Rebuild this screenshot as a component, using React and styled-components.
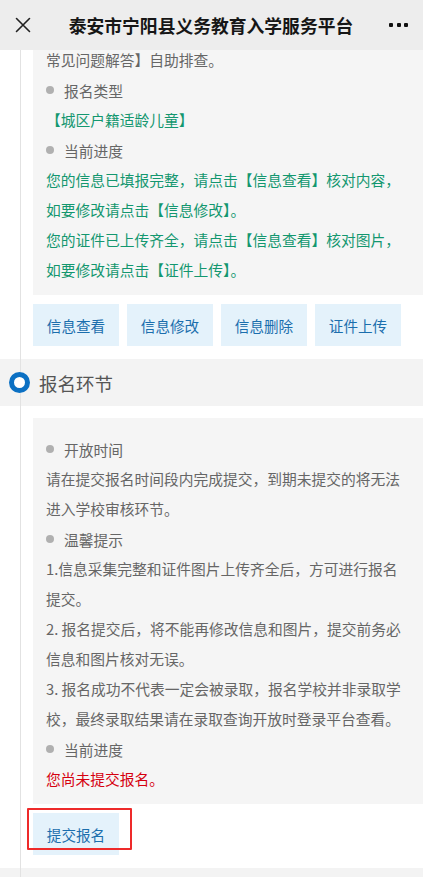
import React from "react";
import styled, { createGlobalStyle } from "styled-components";

const GlobalStyle = createGlobalStyle`
  html, body { margin: 0; padding: 0; background: #ffffff; }
  body {
    font-family: "Noto Sans CJK SC", "Noto Sans", Roboto, sans-serif;
    -webkit-font-smoothing: antialiased;
  }
  * { box-sizing: border-box; }
`;

const Page = styled.div`
  width: 423px;
  overflow: hidden;
`;

const Header = styled.header`
  position: relative;
  z-index: 3;
  height: 50px;
  background: #ededed;
  display: flex;
  align-items: center;
  justify-content: space-between;
  padding: 0 14px 0 13px;
`;

const Title = styled.h1`
  margin: 0;
  flex: 1;
  text-align: center;
  font-size: 17.8px;
  font-weight: 600;
  color: #161616;
  letter-spacing: 0;
  line-height: 50px;
`;

const IconButton = styled.span`
  width: 20px;
  height: 20px;
  display: flex;
  align-items: center;
  justify-content: center;
`;

const Timeline = styled.main`
  position: relative;
  &::before {
    content: "";
    position: absolute;
    left: 20px;
    top: 0;
    bottom: 0;
    width: 1px;
    background: #e2e2e2;
  }
`;

const Card = styled.section`
  margin: ${(p) => (p.$first ? "-21px" : "12px")} 0 0 33px;
  background: #f5f5f5;
  padding: 16px 13px 10px 13px;
`;

const ItemTitle = styled.div`
  display: flex;
  align-items: center;
  gap: 10px;
  height: 30px;
  font-size: 14.75px;
  color: #666666;
`;

const Bullet = styled.span`
  width: 8px;
  height: 8px;
  border-radius: 50%;
  background: #b0b0b0;
  flex: none;
`;

const toneColor = {
  gray: "#666666",
  green: "#13976f",
  red: "#d6000f",
};

const Text = styled.p`
  margin: 0;
  font-size: 14.75px;
  line-height: 30px;
  color: ${(p) => toneColor[p.$tone || "gray"]};
`;

const ButtonRow = styled.div`
  position: relative;
  display: flex;
  gap: 8px;
  margin: 9px 0 13px 33px;
`;

const ActionButton = styled.button`
  min-width: 86px;
  height: 42px;
  padding: 0 13px;
  border: none;
  background: #e4f2fb;
  color: #1b6ead;
  font-family: inherit;
  font-size: 14.6px;
  cursor: pointer;
`;

const Highlight = styled.span`
  position: absolute;
  left: -6px;
  top: -5px;
  width: 105px;
  height: 42px;
  border: 2px solid #ee2a2a;
  border-radius: 1px;
  pointer-events: none;
`;

const StepBand = styled.div`
  height: 47px;
  background: #f3f3f3;
  display: flex;
  align-items: center;
  padding-left: 9px;
  gap: 9px;
`;

const StepDot = styled.span`
  position: relative;
  z-index: 1;
  width: 21px;
  height: 21px;
  border-radius: 50%;
  border: 5px solid #0b70c3;
  background: #ffffff;
  flex: none;
`;

const StepTitle = styled.h2`
  margin: 0;
  font-size: 18.5px;
  font-weight: 400;
  color: #555555;
`;

const Item = ({ label }) => (
  <ItemTitle>
    <Bullet />
    {label}
  </ItemTitle>
);

export default function App() {
  return (
    <Page>
      <GlobalStyle />
      <Header>
        <IconButton>
          <svg width="16" height="16" viewBox="0 0 16 16">
            <path d="M1.5 1.5 L14.5 14.5 M14.5 1.5 L1.5 14.5" stroke="#222" strokeWidth="1.6" strokeLinecap="round" />
          </svg>
        </IconButton>
        <Title>泰安市宁阳县义务教育入学服务平台</Title>
        <IconButton>
          <svg width="20" height="6" viewBox="0 0 20 6">
            <rect x="0" y="1" width="4" height="4" rx="1" fill="#111" />
            <rect x="8" y="1" width="4" height="4" rx="1" fill="#111" />
            <rect x="15" y="1" width="4" height="4" rx="1" fill="#111" />
          </svg>
        </IconButton>
      </Header>

      <Timeline>
        <Card $first>
          <Text>常见问题解答】自助排查。</Text>
          <Item label="报名类型" />
          <Text $tone="green">【城区户籍适龄儿童】</Text>
          <Item label="当前进度" />
          <Text $tone="green">您的信息已填报完整，请点击【信息查看】核对内容，如要修改请点击【信息修改】。</Text>
          <Text $tone="green">您的证件已上传齐全，请点击【信息查看】核对图片，如要修改请点击【证件上传】。</Text>
        </Card>
        <ButtonRow>
          <ActionButton>信息查看</ActionButton>
          <ActionButton>信息修改</ActionButton>
          <ActionButton>信息删除</ActionButton>
          <ActionButton>证件上传</ActionButton>
        </ButtonRow>

        <StepBand>
          <StepDot />
          <StepTitle>报名环节</StepTitle>
        </StepBand>
        <Card>
          <Item label="开放时间" />
          <Text>请在提交报名时间段内完成提交，到期未提交的将无法进入学校审核环节。</Text>
          <Item label="温馨提示" />
          <Text>1.信息采集完整和证件图片上传齐全后，方可进行报名提交。</Text>
          <Text>2. 报名提交后，将不能再修改信息和图片，提交前务必信息和图片核对无误。</Text>
          <Text>3. 报名成功不代表一定会被录取，报名学校并非录取学校，最终录取结果请在录取查询开放时登录平台查看。</Text>
          <Item label="当前进度" />
          <Text $tone="red">您尚未提交报名。</Text>
        </Card>
        <ButtonRow>
          <ActionButton>提交报名</ActionButton>
          <Highlight />
        </ButtonRow>

        <StepBand />
      </Timeline>
    </Page>
  );
}
